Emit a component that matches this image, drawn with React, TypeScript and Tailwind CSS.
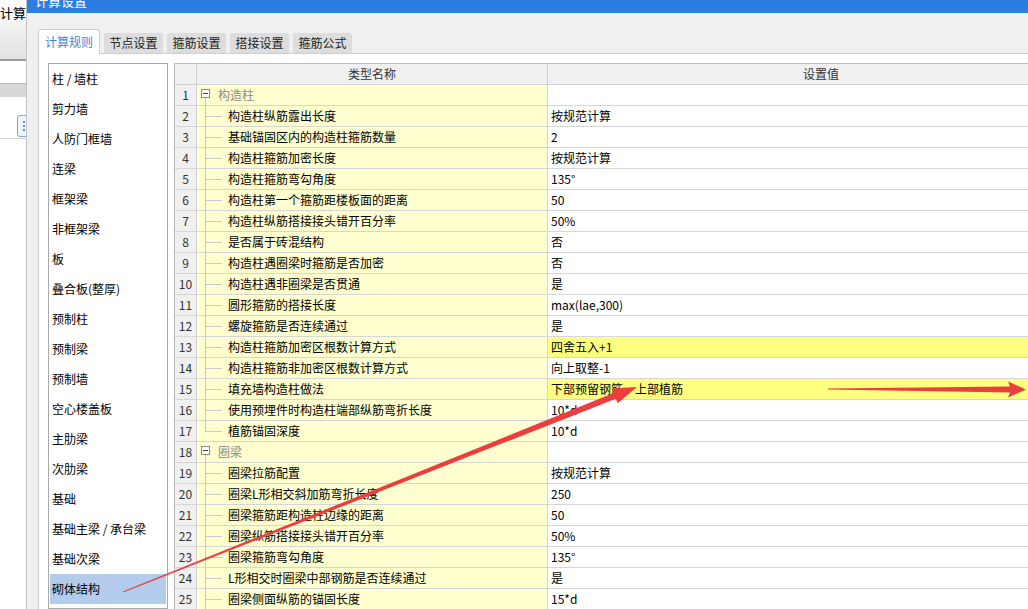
import React from "react";

type Row = { name: string; value?: string; group?: boolean; last?: boolean; hl?: boolean };

const rows: Row[] = [
  { name: "构造柱", group: true },
  { name: "构造柱纵筋露出长度", value: "按规范计算" },
  { name: "基础锚固区内的构造柱箍筋数量", value: "2" },
  { name: "构造柱箍筋加密长度", value: "按规范计算" },
  { name: "构造柱箍筋弯勾角度", value: "135°" },
  { name: "构造柱第一个箍筋距楼板面的距离", value: "50" },
  { name: "构造柱纵筋搭接接头错开百分率", value: "50%" },
  { name: "是否属于砖混结构", value: "否" },
  { name: "构造柱遇圈梁时箍筋是否加密", value: "否" },
  { name: "构造柱遇非圈梁是否贯通", value: "是" },
  { name: "圆形箍筋的搭接长度", value: "max(lae,300)" },
  { name: "螺旋箍筋是否连续通过", value: "是" },
  { name: "构造柱箍筋加密区根数计算方式", value: "四舍五入+1", hl: true },
  { name: "构造柱箍筋非加密区根数计算方式", value: "向上取整-1" },
  { name: "填充墙构造柱做法", value: "下部预留钢筋，上部植筋", hl: true },
  { name: "使用预埋件时构造柱端部纵筋弯折长度", value: "10*d" },
  { name: "植筋锚固深度", value: "10*d", last: true },
  { name: "圈梁", group: true },
  { name: "圈梁拉筋配置", value: "按规范计算" },
  { name: "圈梁L形相交斜加筋弯折长度", value: "250" },
  { name: "圈梁箍筋距构造柱边缘的距离", value: "50" },
  { name: "圈梁纵筋搭接接头错开百分率", value: "50%" },
  { name: "圈梁箍筋弯勾角度", value: "135°" },
  { name: "L形相交时圈梁中部钢筋是否连续通过", value: "是" },
  { name: "圈梁侧面纵筋的锚固长度", value: "15*d" },
];

const menu = [
  "柱 / 墙柱",
  "剪力墙",
  "人防门框墙",
  "连梁",
  "框架梁",
  "非框架梁",
  "板",
  "叠合板(整厚)",
  "预制柱",
  "预制梁",
  "预制墙",
  "空心楼盖板",
  "主肋梁",
  "次肋梁",
  "基础",
  "基础主梁 / 承台梁",
  "基础次梁",
  "砌体结构",
];

const tabs = ["节点设置", "箍筋设置", "搭接设置", "箍筋公式"];

const NameCell = ({ row }: { row: Row }) => (
  <div className="w-[351px] shrink-0 border-r border-[#d6d6d6] bg-[#ffffd0] flex items-stretch pl-[4px]">
    {row.group ? (
      <>
        <div className="w-[9px] flex flex-col items-center">
          <div className="h-[4px]" />
          <div className="w-[9px] h-[9px] border border-[#8a8a8a] bg-white flex items-center justify-center">
            <div className="w-[5px] h-px bg-[#444]" />
          </div>
          <div className="flex-1 w-0 border-l border-[#c8c8c8]" />
        </div>
        <span className="ml-[8px] self-center text-[#8a8a8a]">{row.name}</span>
      </>
    ) : (
      <>
        <div className="ml-[4px] w-[17px] flex flex-col">
          <div className="flex-1 border-l border-b border-[#cacaca]" />
          <div className={`flex-1 ${row.last ? "" : "border-l border-[#cacaca]"}`} />
        </div>
        <span className="ml-[6px] self-center">{row.name}</span>
      </>
    )}
  </div>
);

const BackStrip = () => (
  <div className="w-[27px] shrink-0 overflow-hidden border-r border-[#c4c4c4] bg-white flex flex-col">
    <div className="h-[59px] bg-gradient-to-b from-white to-[#e2e2e2] pt-[6px] whitespace-nowrap text-[13px]">
      计算
    </div>
    <div className="h-[2px] bg-[#9a9a9a]" />
    <div className="h-[22px] bg-white" />
    <div className="h-[14px] bg-[#d8d8d8] border-t border-[#b8b8b8]" />
    <div className="pt-[18px] pl-[17px]">
      <div className="w-[14px] h-[22px] border border-[#77a7e0] rounded-[3px] bg-[#eef5fd] flex flex-col items-center justify-center gap-[2px]">
        <div className="w-[2px] h-[2px] bg-[#5b8fd0]" />
        <div className="w-[2px] h-[2px] bg-[#5b8fd0]" />
        <div className="w-[2px] h-[2px] bg-[#5b8fd0]" />
      </div>
    </div>
    <div className="mt-[1px] h-px bg-[#d0d0d0]" />
  </div>
);

export default function App() {
  return (
    <div className="w-[1028px] h-[609px] overflow-hidden relative flex font-['Microsoft_YaHei','Noto_Sans_CJK_SC',sans-serif] text-[12px] text-black leading-none">
      <BackStrip />

      <div className="flex-1 min-w-0 flex flex-col bg-[#f0f0f0]">
        {/* title bar */}
        <div className="h-[13px] bg-[#2b7de1] overflow-hidden pl-[8px] text-white text-[13px] whitespace-nowrap">
          <div className="-mt-[6px]">计算设置</div>
        </div>

        <div className="flex-1 min-h-0 flex flex-col pt-[16px] pl-[11px]">
          {/* tabs */}
          <div className="h-[24px] flex items-end">
            <div className="relative z-10 -mb-px h-[25px] w-[62px] bg-white border border-b-0 border-[#cfcfcf] rounded-t-[3px] text-[#4286d6] flex items-center justify-center">
              计算规则
            </div>
            {tabs.map((t) => (
              <div
                key={t}
                className="ml-[4px] first-of-type:ml-[3px] h-[20px] w-[59px] bg-[#dddddd] rounded-t-[2px] text-[#222] flex items-center justify-center"
              >
                {t}
              </div>
            ))}
          </div>

          {/* tab panel */}
          <div className="flex-1 min-h-0 bg-white border-l border-t border-[#cfcfcf] flex pl-[9px] pt-[9px]">
            {/* left list */}
            <div className="w-[120px] shrink-0 border border-[#aaaaaa] px-px">
              {menu.map((m, i) => (
                <div
                  key={m}
                  className={`h-[30px] flex items-center pl-[2px] whitespace-nowrap ${
                    i === menu.length - 1 ? "bg-[#b3cceb]" : ""
                  }`}
                >
                  {m}
                </div>
              ))}
            </div>

            {/* grid */}
            <div className="ml-[6px] flex-1 min-w-0 overflow-hidden border-l border-t border-[#bcbcbc]">
              <div className="flex h-[21px] border-b border-[#d0d0d0] bg-[#f0f0f0] text-[#333]">
                <div className="w-[22px] shrink-0 border-r border-[#d0d0d0]" />
                <div className="w-[351px] shrink-0 border-r border-[#d0d0d0] flex items-center justify-center">
                  类型名称
                </div>
                <div className="w-[546px] shrink-0 flex items-center justify-center">设置值</div>
              </div>
              {rows.map((r, i) => (
                <div key={i} className="flex h-[21px] border-b border-[#d6d6d6]">
                  <div className="w-[22px] shrink-0 border-r border-[#d0d0d0] bg-[#f0f0f0] text-[#333] flex items-center justify-center">
                    {i + 1}
                  </div>
                  <NameCell row={r} />
                  <div
                    className={`w-[546px] shrink-0 flex items-center pl-[3px] ${
                      r.hl ? "bg-[#ffff80]" : "bg-white"
                    }`}
                  >
                    {r.value}
                  </div>
                </div>
              ))}
            </div>
          </div>
        </div>
      </div>

      {/* red annotation arrows */}
      <svg className="absolute inset-0 pointer-events-none" width="1028" height="609" viewBox="0 0 1028 609">
        <polygon
          fill="#ee3d3d"
          points="123.2,592.6 615.8,398.7 617.7,403.3 637,387 611.7,388.5 613.6,393.1 122.8,591.4"
        />
        <polygon
          fill="#ee3d3d"
          points="828,389.4 1010,392.5 1008,397.5 1026,389.5 1008,381.5 1010,386.5 828,388.6"
        />
      </svg>
    </div>
  );
}
